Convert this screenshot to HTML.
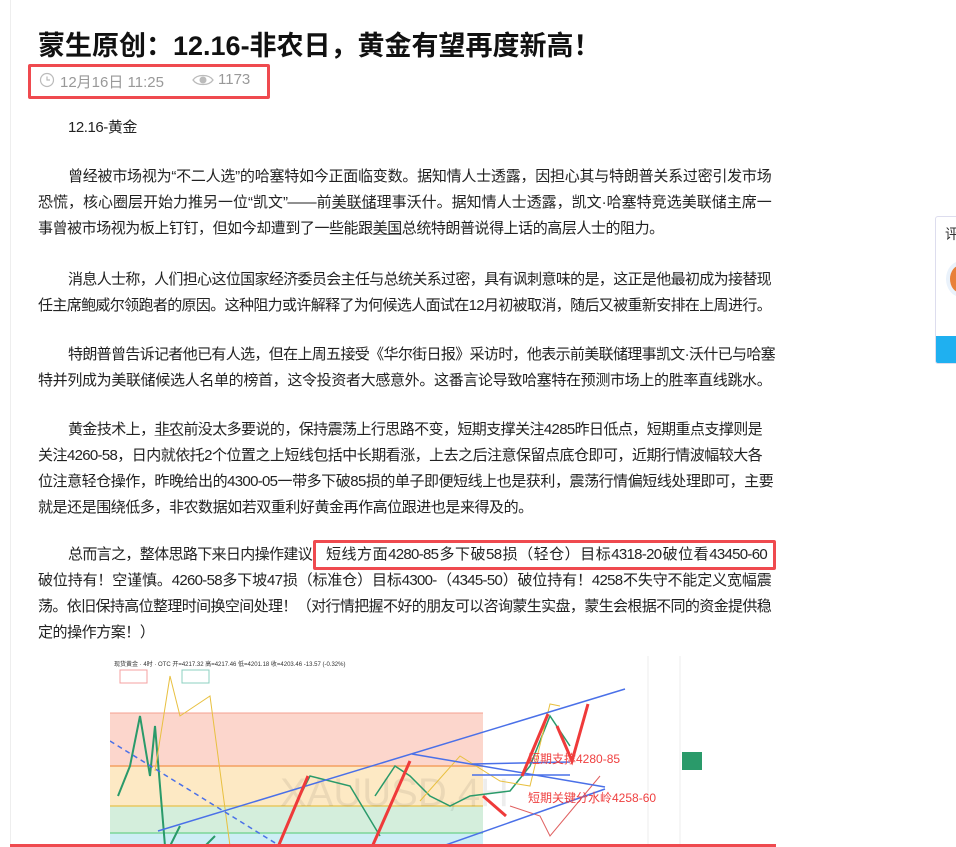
<!DOCTYPE html>
<html><head><meta charset="utf-8"><style>
*{margin:0;padding:0;box-sizing:border-box}
body{width:956px;height:847px;overflow:hidden;background:#fff;font-family:"Liberation Sans","Noto Sans CJK SC",sans-serif;color:#222;position:relative}
.l{position:absolute;left:38px;font-size:15px;white-space:nowrap;line-height:26px;color:#222;letter-spacing:-0.45px}
.i{left:68px}
.j{letter-spacing:-0.7px;text-align:justify;text-align-last:justify;overflow:visible}
.j.f{width:733px}.j.i.f{width:703px}
u{text-decoration:underline;text-decoration-color:#888}
</style></head><body>
<div style="position:absolute;left:10px;top:0;width:1px;height:847px;background:#eee"></div>
<div style="position:absolute;left:38px;top:24px;font-size:27px;font-weight:bold;color:#111;white-space:nowrap">蒙生原创：12.16-非农日，黄金有望再度新高！</div>
<div style="position:absolute;left:28px;top:64px;width:242px;height:35px;border:3px solid #ef4a4f;border-radius:2px"></div>
<svg style="position:absolute;left:39px;top:72px" width="16" height="16" viewBox="0 0 16 16"><circle cx="8" cy="8" r="6.5" fill="none" stroke="#bbb" stroke-width="1.2"/><path d="M8 4.5V8h3" fill="none" stroke="#bbb" stroke-width="1.2"/></svg>
<div style="position:absolute;left:60px;top:71px;font-size:15px;color:#999;white-space:nowrap">12月16日 11:25</div>
<svg style="position:absolute;left:192px;top:73px" width="22" height="14" viewBox="0 0 22 14"><path d="M1 7C5 1 17 1 21 7C17 13 5 13 1 7Z" fill="none" stroke="#bbb" stroke-width="1.3"/><circle cx="11" cy="7" r="3.5" fill="#bbb"/></svg>
<div style="position:absolute;left:218px;top:71px;font-size:15px;color:#999">1173</div>

<div class="l i" style="top:115px">12.16-黄金</div>
<div class="l i j f" style="top:164px">曾经被市场视为“不二人选”的哈塞特如今正面临变数。据知情人士透露，因担心其与特朗普关系过密引发市场</div>
<div class="l j f" style="top:190px">恐慌，核心圈层开始力推另一位“凯文”——前<u>美联储</u>理事沃什。据知情人士透露，凯文·哈塞特竞选美联储主席一</div>
<div class="l" style="top:216px">事曾被市场视为板上钉钉，但如今却遭到了一些能跟<u>美国</u>总统特朗普说得上话的高层人士的阻力。</div>
<div class="l i j f" style="top:267px">消息人士称，人们担心这位国家经济委员会主任与总统关系过密，具有讽刺意味的是，这正是他最初成为接替现</div>
<div class="l j f" style="top:293px">任主席鲍威尔领跑者的原因。这种阻力或许解释了为何候选人面试在12月初被取消，随后又被重新安排在上周进行。</div>
<div class="l i j" style="top:342px;width:707px">特朗普曾告诉记者他已有人选，但在上周五接受《华尔街日报》采访时，他表示前美联储理事凯文·沃什已与哈塞</div>
<div class="l j f" style="top:368px">特并列成为美联储候选人名单的榜首，这令投资者大感意外。这番言论导致哈塞特在预测市场上的胜率直线跳水。</div>
<div class="l i j" style="top:417px;width:694px">黄金技术上，<u>非农</u>前没太多要说的，保持震荡上行思路不变，短期支撑关注4285昨日低点，短期重点支撑则是</div>
<div class="l j" style="top:443px;width:724px">关注4260-58，日内就依托2个位置之上短线包括中长期看涨，上去之后注意保留点底仓即可，近期行情波幅较大各</div>
<div class="l j" style="top:469px;width:735px">位注意轻仓操作，昨晚给出的4300-05一带多下破85损的单子即便短线上也是获利，震荡行情偏短线处理即可，主要</div>
<div class="l" style="top:495px">就是还是围绕低多，非农数据如若双重利好黄金再作高位跟进也是来得及的。</div>
<div class="l i j" style="top:542px;width:244px">总而言之，整体思路下来日内操作建议</div>
<div style="position:absolute;left:313px;top:540px;width:463px;height:30px;border:3px solid #ef4a4f;border-radius:2px"></div>
<div class="l j" style="left:326px;top:542px;width:441px">短线方面4280-85多下破58损（轻仓）目标4318-20破位看43450-60</div>
<div class="l j" style="top:568px;width:733px">破位持有！空谨慎。4260-58多下坡47损（标准仓）目标4300-（4345-50）破位持有！4258不失守不能定义宽幅震</div>
<div class="l j" style="top:594px;width:733px">荡。依旧保持高位整理时间换空间处理！（对行情把握不好的朋友可以咨询蒙生实盘，蒙生会根据不同的资金提供稳</div>
<div class="l" style="top:620px">定的操作方案！）</div>

<svg style="position:absolute;left:110px;top:656px" width="592" height="191" viewBox="0 0 592 191">
<rect width="592" height="191" fill="#fff"/>
<rect x="0" y="57" width="373" height="53" fill="#fcd6cc"/>
<rect x="0" y="110" width="373" height="40" fill="#fde9c4"/>
<rect x="0" y="150" width="373" height="27" fill="#d4eedc"/>
<rect x="0" y="177" width="373" height="14" fill="#cdeef5"/>
<line x1="0" y1="57" x2="373" y2="57" stroke="#f4a090"/>
<line x1="0" y1="110" x2="373" y2="110" stroke="#f4a060" stroke-width="1.5"/>
<line x1="0" y1="150" x2="373" y2="150" stroke="#e8c860" stroke-width="1.5"/>
<line x1="0" y1="177" x2="373" y2="177" stroke="#7dd69a" stroke-width="1.5"/>
<line x1="538" y1="0" x2="538" y2="191" stroke="#eee"/>
<line x1="570" y1="0" x2="570" y2="191" stroke="#eee"/>
<text x="170" y="150" font-size="40" fill="#000" fill-opacity="0.07" font-family="Liberation Sans">XAUUSD,4H</text>
<path d="M8 140L20 110L30 60L40 120L45 70L55 190M60 190L70 170M95 190L105 180" stroke="#2a9a6a" stroke-width="2" fill="none"/>
<path d="M45 115L60 20L70 60L100 40L120 190" stroke="#e8c040" fill="none"/>
<path d="M190 140L200 120L240 130L270 180M265 140L285 110L300 120L320 140L340 150L360 140L400 135L420 110L440 60L460 90" stroke="#2a9a6a" stroke-width="1.5" fill="none"/>
<path d="M310 145L350 100L390 125L420 130L440 48L450 50" stroke="#e8c040" fill="none"/>
<path d="M400 150L430 160L440 180L465 150L490 120" stroke="#e06060" fill="none"/>
<path d="M48 175L515 33" stroke="#4a70e8" stroke-width="1.5"/>
<path d="M0 85L170 190" stroke="#4a70e8" stroke-width="1.5" stroke-dasharray="5 4"/>
<path d="M330 191L495 133" stroke="#4a70e8" stroke-width="1.5"/>
<path d="M302 98L495 131" stroke="#4a70e8" stroke-width="1.5"/>
<path d="M362 108L460 106" stroke="#4a70e8" stroke-width="1.5"/>
<path d="M362 119L460 119" stroke="#4a70e8" stroke-width="1.5"/>
<g stroke="#ef3a3a" stroke-width="3" fill="none">
<path d="M168 191L198 120M262 191L300 105M373 140L396 160M412 120L438 58M447 70L462 105L478 48"/>
</g>
<rect x="10" y="14" width="27" height="13" fill="#fff" stroke="#f4a0a0"/>
<rect x="72" y="14" width="27" height="13" fill="#fff" stroke="#8cd0c0"/>
<text x="4" y="10" font-size="6" fill="#333">现货黄金 · 4时 · OTC   开=4217.32 高=4217.46 低=4201.18 收=4203.46 -13.57 (-0.32%)</text>
<text x="418" y="107" font-size="12" fill="#ef4040" font-family="Liberation Sans,Noto Sans CJK SC">短期支撑4280-85</text>
<text x="418" y="146" font-size="12" fill="#ef4040" font-family="Liberation Sans,Noto Sans CJK SC">短期关键分水岭4258-60</text>
<rect x="572" y="96" width="20" height="18" fill="#2a9a6a"/>
</svg>
<div style="position:absolute;left:10px;top:844px;width:766px;height:3px;background:#ef4a4f"></div>

<div style="position:absolute;left:935px;top:216px;width:30px;height:148px;border:1px solid #dde;border-radius:3px;background:#fff;overflow:hidden">
<div style="position:absolute;left:9px;top:7px;font-size:14px;color:#333">评</div>
<div style="position:absolute;left:10px;top:44px;width:30px;height:36px;border-radius:50%;background:#e8803a;border:4px solid #eaf2fb"></div>
<div style="position:absolute;left:0;top:119px;width:30px;height:29px;background:#1fb0f0"></div>
</div>
</body></html>
